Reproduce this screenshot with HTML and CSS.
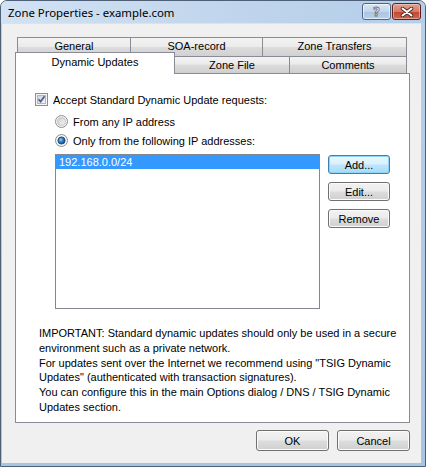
FILE: index.html
```html
<!DOCTYPE html>
<html>
<head>
<meta charset="utf-8">
<link rel="stylesheet" href="styles.css">
</head>
<body>
<div class="window">
  <div class="titlebar">
    <span class="title">Zone Properties - example.com</span>
    <div class="caption-buttons">
      <div class="cap-btn help"><span>?</span></div>
      <div class="cap-btn close">
        <svg width="14" height="10" viewBox="0 0 14 10"><path d="M2.5 1.5 L11.5 8.5 M11.5 1.5 L2.5 8.5" stroke="#3a2a2a" stroke-width="3.6" stroke-linecap="round"/><path d="M2.5 1.5 L11.5 8.5 M11.5 1.5 L2.5 8.5" stroke="#ffffff" stroke-width="2" stroke-linecap="round"/></svg>
      </div>
    </div>
  </div>
  <div class="client">
    <div class="tabstrip">
      <div class="tabrow back">
        <div class="tab t-general">General</div>
        <div class="tab t-soa">SOA-record</div>
        <div class="tab t-zt">Zone Transfers</div>
      </div>
      <div class="tabrow front">
        <div class="tab selected t-du">Dynamic Updates</div>
        <div class="tab t-zf">Zone File</div>
        <div class="tab t-cm">Comments</div>
      </div>
    </div>
    <div class="panel">
      <div class="check-row">
        <svg class="checkbox" width="13" height="13" viewBox="0 0 13 13">
          <defs><linearGradient id="cbg" x1="0" y1="0" x2="1" y2="1"><stop offset="0" stop-color="#cbcfd5"/><stop offset="1" stop-color="#f6f6f6"/></linearGradient></defs>
          <rect x="0.5" y="0.5" width="12" height="12" fill="#f4f4f4" stroke="#8e8f8f"/>
          <rect x="2.5" y="2.5" width="8" height="8" fill="url(#cbg)" stroke="#b3b8bd"/>
          <path d="M3.5 6.2 L5.6 8.6 L9.6 3.2" fill="none" stroke="#4a5f97" stroke-width="1.7"/>
        </svg>
        <span>Accept Standard Dynamic Update requests:</span>
      </div>
      <div class="radio-group">
        <div class="radio-row">
          <svg class="radio" width="13" height="13" viewBox="0 0 13 13">
            <defs><linearGradient id="rg" x1="0" y1="0" x2="1" y2="1"><stop offset="0" stop-color="#c9ccd1"/><stop offset="1" stop-color="#f7f7f7"/></linearGradient></defs>
            <circle cx="6.5" cy="6.5" r="6" fill="#f4f4f4" stroke="#8e8f8f"/>
            <circle cx="6.5" cy="6.5" r="4" fill="url(#rg)" stroke="#c2c5ca"/>
          </svg>
          <span>From any IP address</span>
        </div>
        <div class="radio-row">
          <svg class="radio" width="13" height="13" viewBox="0 0 13 13">
            <defs><radialGradient id="rsel" cx="0.4" cy="0.4" r="0.7"><stop offset="0" stop-color="#8fd0f5"/><stop offset="0.5" stop-color="#2a74b8"/><stop offset="1" stop-color="#173e6e"/></radialGradient></defs>
            <circle cx="6.5" cy="6.5" r="6" fill="#f4f4f4" stroke="#8e8f8f"/>
            <circle cx="6.5" cy="6.5" r="3.6" fill="url(#rsel)" stroke="#1c3d6a" stroke-width="0.8"/>
          </svg>
          <span>Only from the following IP addresses:</span>
        </div>
      </div>
      <div class="list-area">
        <div class="listbox">
          <div class="list-item selected">192.168.0.0/24</div>
        </div>
        <div class="list-buttons">
          <div class="btn small default">Add...</div>
          <div class="btn small">Edit...</div>
          <div class="btn small">Remove</div>
        </div>
      </div>
      <p class="note">IMPORTANT: Standard dynamic updates should only be used in a secure<br>environment such as a private network.<br>For updates sent over the Internet we recommend using "TSIG Dynamic<br>Updates" (authenticated with transaction signatures).<br>You can configure this in the main Options dialog / DNS / TSIG Dynamic<br>Updates section.</p>
    </div>
    <div class="footer">
      <div class="btn big">OK</div>
      <div class="btn big">Cancel</div>
    </div>
  </div>
</div>
</body>
</html>
```

FILE: styles.css
```css
* { box-sizing: border-box; }
html, body {
  margin: 0;
  padding: 0;
  width: 426px;
  height: 467px;
  overflow: hidden;
  background: #ffffff;
}
body {
  font-family: "Liberation Sans", Arial, sans-serif;
  font-size: 11px;
  color: #000;
}
.window {
  width: 426px;
  height: 467px;
  display: flex;
  flex-direction: column;
  background: linear-gradient(to bottom, #c6d9ee 0px, #b8cfe8 30px, #a9c4e3 100%);
  border: 1px solid #4d6077;
  border-radius: 7px 7px 0 0;
}
.titlebar {
  height: 22px;
  flex: none;
  display: flex;
  align-items: flex-start;
  padding-left: 7px;
  padding-right: 4px;
  background: linear-gradient(to right, #d2e2f3 0%, #c3d7ed 45%, #b4cde9 100%);
  border-radius: 6px 6px 0 0;
}
.title {
  font-family: "Noto Sans", "Open Sans", sans-serif;
  font-size: 11.4px;
  line-height: 14px;
  margin-top: 5px;
  color: #000;
  white-space: nowrap;
}
.caption-buttons {
  margin-left: auto;
  display: flex;
  gap: 1px;
  margin-top: 2px;
}
.cap-btn {
  width: 29px;
  height: 17px;
  border: 1px solid #4e6582;
  border-radius: 3px;
  display: flex;
  align-items: center;
  justify-content: center;
}
.cap-btn.help {
  background: linear-gradient(to bottom, #d9e7f5 0%, #c2d6ec 50%, #aac4e3 51%, #b7d0ea 100%);
  box-shadow: inset 0 0 0 1px rgba(255,255,255,0.6);
}
.cap-btn.help span {
  font-family: "DejaVu Sans", sans-serif;
  font-weight: bold;
  font-size: 12px;
  line-height: 12px;
  color: #e9eef5;
  -webkit-text-stroke: 0.8px #62708a;
}
.cap-btn.close {
  border-color: #5b2020;
  background: linear-gradient(to bottom, #e1a191 0%, #d67a67 50%, #c2442e 51%, #d0664e 100%);
  box-shadow: inset 0 0 0 1px rgba(255,220,210,0.5);
}
.client {
  flex: 1;
  margin: 0 4px 3px 1px;
  background: #f0f0f0;
  display: flex;
  flex-direction: column;
  padding: 13px 11px 0 13px;
  border-top: 1px solid #dbe4ee;
}
.tabstrip {
  position: relative;
  height: 36px;
  flex: none;
}
.tabrow {
  display: flex;
}
.tabrow.back {
  padding-left: 2px;
  height: 20px;
}
.tabrow.front {
  margin-top: -5px;
  height: 21px;
  align-items: flex-end;
  position: relative;
  z-index: 2;
}
.tab {
  border: 1px solid #898c95;
  border-bottom: none;
  background: linear-gradient(to bottom, #f3f3f3 0%, #ebebeb 45%, #dcdcdc 50%, #cfcfcf 100%);
  text-align: center;
  white-space: nowrap;
  line-height: 16px;
  margin-right: -1px;
}
.tabrow.back .tab { height: 20px; padding-top: 0; }
.tabrow.front .tab { height: 17px; }
.tab.selected {
  background: #ffffff;
  height: 22px !important;
  margin-bottom: -1px;
  line-height: 18px;
  padding-top: 0;
  position: relative;
  z-index: 3;
}
.t-general { width: 114px; }
.t-soa { width: 133px; }
.t-zt { width: 145px; }
.t-du { width: 160px; }
.t-zf { width: 116px; }
.t-cm { width: 118px; }
.panel {
  width: 395px;
  height: 350px;
  flex: none;
  background: #ffffff;
  border: 1px solid #898c95;
  padding: 19px 0 0 19px;
}
.check-row, .radio-row {
  display: flex;
  align-items: center;
  height: 13px;
  white-space: nowrap;
}
.checkbox, .radio { flex: none; margin-right: 5px; }
.radio-group {
  padding-left: 20px;
  margin-top: 9px;
  display: flex;
  flex-direction: column;
  gap: 6px;
}
.list-area {
  display: flex;
  margin-top: 7px;
  padding-left: 20px;
}
.listbox {
  width: 265px;
  height: 155px;
  border: 1px solid #828790;
  background: #fff;
}
.list-item {
  height: 14px;
  line-height: 14px;
  padding-left: 3px;
}
.list-item.selected {
  background: #3399ff;
  color: #ffffff;
}
.list-buttons {
  margin-left: 8px;
  margin-top: 1px;
  display: flex;
  flex-direction: column;
  gap: 8px;
}
.btn {
  border: 1px solid #707070;
  border-radius: 3px;
  background: linear-gradient(to bottom, #f2f2f2 0%, #ebebeb 48%, #dddddd 52%, #cfcfcf 100%);
  box-shadow: inset 0 0 0 1px #fbfbfb;
  display: flex;
  align-items: center;
  justify-content: center;
  white-space: nowrap;
}
.btn.small { width: 62px; height: 19px; }
.btn.default {
  border-color: #3c7fb1;
  box-shadow: inset 0 0 0 1px #8fd3f6;
  background: linear-gradient(to bottom, #eaf6fd 0%, #d9f0fc 48%, #bee6fd 52%, #a7d9f5 100%);
}
.btn.big { width: 73px; height: 21px; }
.note {
  margin: 17px 0 0 4px;
  line-height: 14.8px;
  white-space: nowrap;
}
.footer {
  display: flex;
  justify-content: flex-end;
  gap: 8px;
  margin-top: 7px;
  width: 395px;
}
```
